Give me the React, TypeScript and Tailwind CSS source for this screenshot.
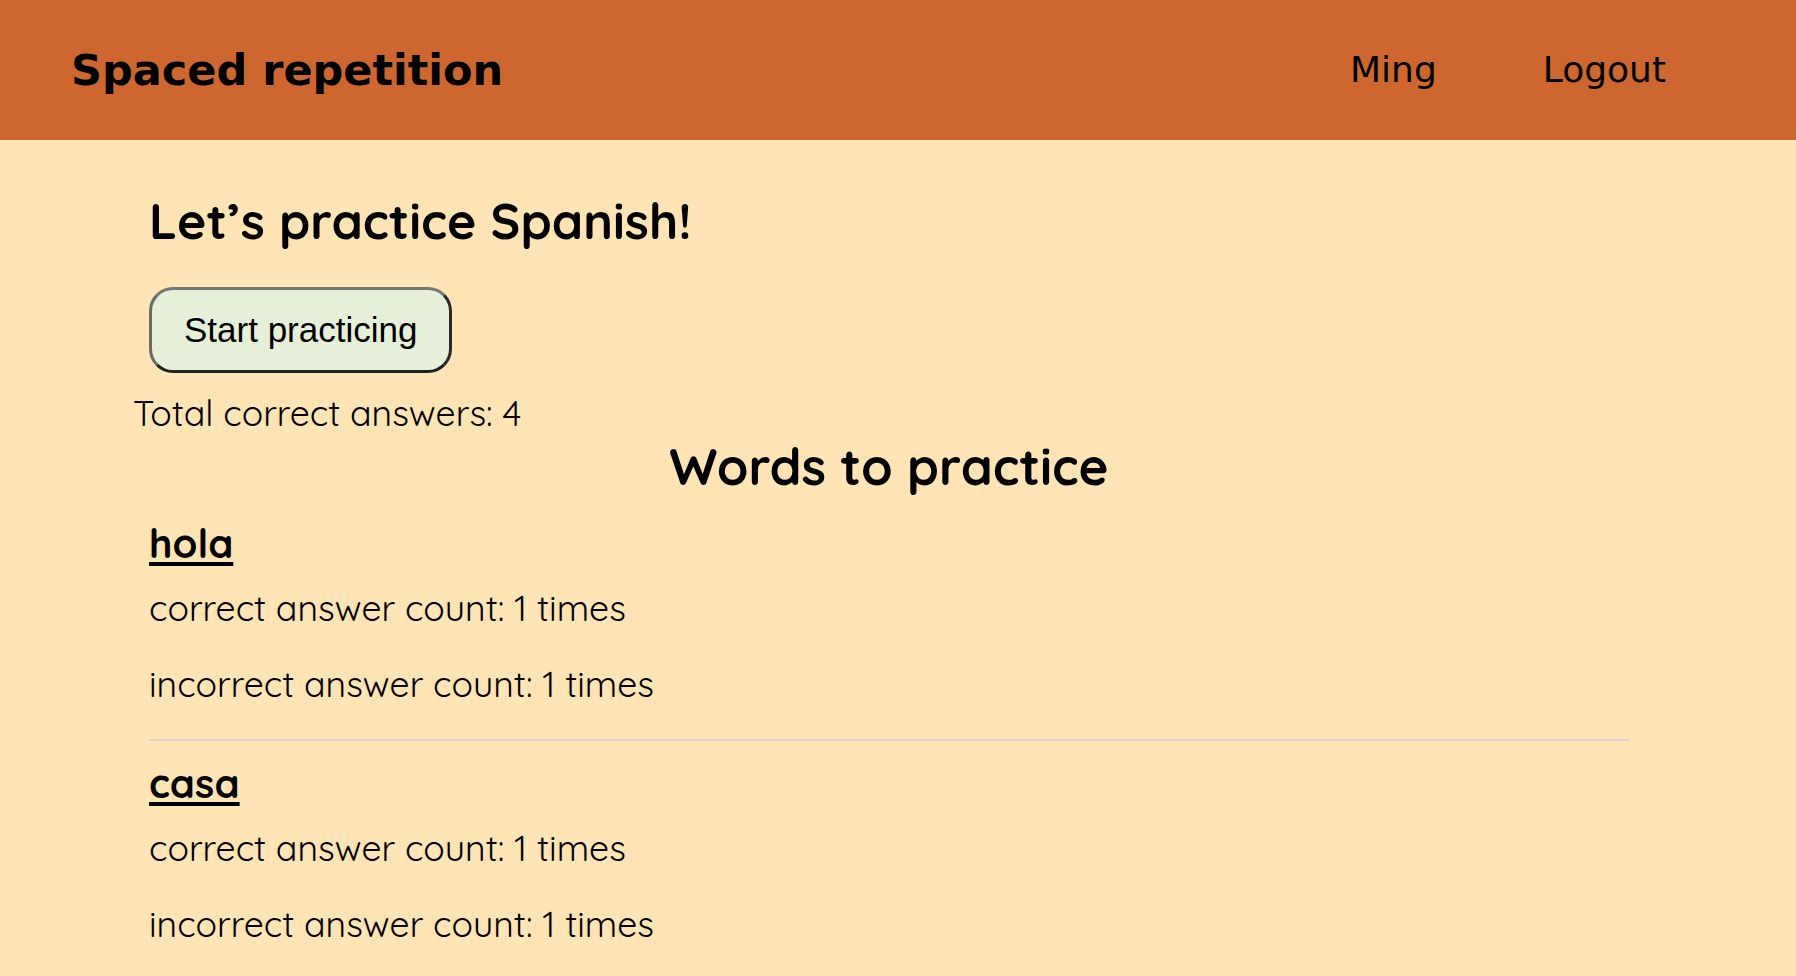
import React from "react";

const words = [
  { word: "hola", correct: 1, incorrect: 1 },
  { word: "casa", correct: 1, incorrect: 1 },
];

export default function App() {
  return (
    <div className="min-h-[976px] w-full bg-[#FFE4B5] text-black">
      <header className="flex h-[140px] items-center bg-[#CD672F] pl-[71px] pr-[130px] font-['Comic_Sans_MS','DejaVu_Sans',sans-serif]">
        <h1 className="text-[43px] font-bold">Spaced repetition</h1>
        <nav className="ml-auto flex items-center gap-[106px] text-[36px]">
          <span>Ming</span>
          <span>Logout</span>
        </nav>
      </header>

      <main className="w-[1629px] pl-[149px] font-['Quicksand','Lato',sans-serif]">
        <h2 className="mt-[51px] h-[60px] text-[50px] font-bold leading-[60px]">
          Let’s practice Spanish!
        </h2>
        <button className="mt-[36px] h-[86px] rounded-[24px] border-[3px] border-t-[#777777] border-l-[#6a6a6a] border-r-[#2a2a2a] border-b-[#222222] bg-[#E6F0D9] px-[32px] py-[20px] font-['Liberation_Sans',Arial,sans-serif] text-[35px] leading-[40px]">
          Start practicing
        </button>
        <p className="mt-[20px] -ml-[16px] h-[40px] text-[35.6px] leading-[40px]">
          Total correct answers: 4
        </p>
        <h2 className="mt-[3px] h-[60px] text-center text-[51px] font-bold leading-[60px]">
          Words to practice
        </h2>
        <ul className="mt-[23px]">
          {words.map((w, i) => (
            <li key={w.word}>
              {i > 0 && <div className="mb-[18px] mt-[35px] h-[2px] bg-[#D6D3CC]" />}
              <h3 className="h-[48px] text-[40px] font-bold leading-[48px]">
                <span className="underline decoration-[4px] underline-offset-[4px]">{w.word}</span>
              </h3>
              <p className="mt-[21px] h-[40px] text-[35.6px] leading-[40px]">
                correct answer count: {w.correct} times
              </p>
              <p className="mt-[36px] h-[40px] text-[35.6px] leading-[40px]">
                incorrect answer count: {w.incorrect} times
              </p>
            </li>
          ))}
        </ul>
      </main>
    </div>
  );
}
